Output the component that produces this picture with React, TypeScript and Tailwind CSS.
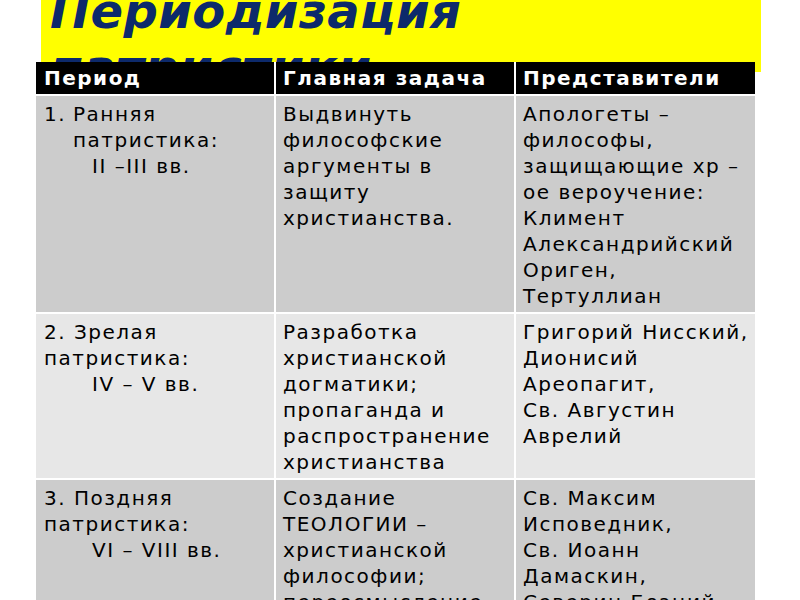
import React from "react";

type Row = {
  bg: string;
  num: string;
  first: string;
  firstRest: string[];
  hanging: boolean;
  dates: string;
  task: string[];
  reps: string[];
};

const rows: Row[] = [
  {
    bg: "bg-[#cccccc]",
    num: "1.",
    first: "Ранняя",
    firstRest: ["патристика:"],
    hanging: true,
    dates: "II –III вв.",
    task: ["Выдвинуть", "философские", "аргументы в", "защиту", "христианства."],
    reps: [
      "Апологеты –",
      "философы,",
      "защищающие хр –",
      "ое вероучение:",
      "Климент",
      "Александрийский",
      "Ориген,",
      "Тертуллиан",
    ],
  },
  {
    bg: "bg-[#e7e7e7]",
    num: "2.",
    first: "Зрелая",
    firstRest: ["патристика:"],
    hanging: false,
    dates: "IV – V вв.",
    task: [
      "Разработка",
      "христианской",
      "догматики;",
      "пропаганда и",
      "распространение",
      "христианства",
    ],
    reps: ["Григорий Нисский,", "Дионисий", "Ареопагит,", "Св. Августин", "Аврелий"],
  },
  {
    bg: "bg-[#cccccc]",
    num: "3.",
    first: "Поздняя",
    firstRest: ["патристика:"],
    hanging: false,
    dates: "VI – VIII вв.",
    task: ["Создание", "ТЕОЛОГИИ –", "христианской", "философии;", "переосмысление"],
    reps: ["Св. Максим", "Исповедник,", "Св. Иоанн", "Дамаскин,", "Северин Боэций"],
  },
];

export default function App() {
  return (
    <div className="w-[800px] h-[600px] bg-white overflow-hidden font-['DejaVu_Sans',sans-serif] text-black">
      <div className="flow-root ml-[41px] w-[720px] h-[72px] bg-[#ffff00]">
        <div className="-mt-[17px] pl-[9px] text-[48px] leading-[56px] font-bold italic tracking-[0.4px] text-[#0d2a6b] whitespace-nowrap">
          <div>Периодизация</div>
          <div>патристики</div>
        </div>
      </div>
      <div className="relative -mt-[10px] ml-[36px] w-[719px] grid grid-cols-[238px_238px_239px] gap-[2px] bg-white text-[20px] leading-[26px] tracking-[1.5px]">
        <div className="bg-black text-white font-bold px-[8px] py-[3px]">Период</div>
        <div className="bg-black text-white font-bold px-[7px] py-[3px]">Главная задача</div>
        <div className="bg-black text-white font-bold px-[7px] py-[3px]">Представители</div>
        {rows.map((r) => (
          <React.Fragment key={r.num}>
            <div className={`${r.bg} px-[8px] pt-[5px] pb-[3px] whitespace-nowrap`}>
              {r.hanging ? (
                <div className="flex">
                  <div className="w-[29px] shrink-0">{r.num}</div>
                  <div>
                    <div>{r.first}</div>
                    {r.firstRest.map((t) => (
                      <div key={t}>{t}</div>
                    ))}
                  </div>
                </div>
              ) : (
                <>
                  <div>
                    {r.num} {r.first}
                  </div>
                  {r.firstRest.map((t) => (
                    <div key={t}>{t}</div>
                  ))}
                </>
              )}
              <div className="pl-[48px]">{r.dates}</div>
            </div>
            <div className={`${r.bg} px-[7px] pt-[5px] pb-[3px] whitespace-nowrap`}>
              {r.task.map((t) => (
                <div key={t}>{t}</div>
              ))}
            </div>
            <div className={`${r.bg} px-[7px] pt-[5px] pb-[3px] whitespace-nowrap`}>
              {r.reps.map((t) => (
                <div key={t}>{t}</div>
              ))}
            </div>
          </React.Fragment>
        ))}
      </div>
    </div>
  );
}
